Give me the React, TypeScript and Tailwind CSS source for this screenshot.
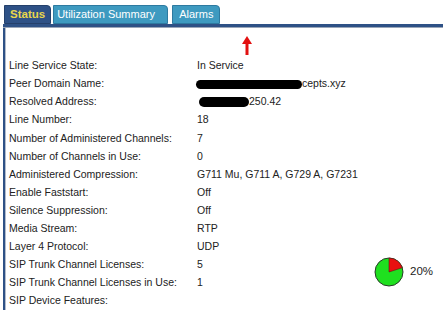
import React from "react";

const rows: [string, React.ReactNode][] = [
  ["Line Service State:", "In Service"],
  [
    "Peer Domain Name:",
    <span className="flex items-center">
      <span className="inline-block w-[106px] h-[9px] bg-black rounded-full -ml-[1px]" />
      <span>cepts.xyz</span>
    </span>,
  ],
  [
    "Resolved Address:",
    <span className="flex items-center">
      <span className="inline-block w-[50px] h-[10px] bg-black rounded-full ml-[2px]" />
      <span>250.42</span>
    </span>,
  ],
  ["Line Number:", "18"],
  ["Number of Administered Channels:", "7"],
  ["Number of Channels in Use:", "0"],
  ["Administered Compression:", "G711 Mu, G711 A, G729 A, G7231"],
  ["Enable Faststart:", "Off"],
  ["Silence Suppression:", "Off"],
  ["Media Stream:", "RTP"],
  ["Layer 4 Protocol:", "UDP"],
  ["SIP Trunk Channel Licenses:", "5"],
  ["SIP Trunk Channel Licenses in Use:", "1"],
  ["SIP Device Features:", ""],
];

export default function App() {
  return (
    <div className="w-[443px] h-[310px] bg-white overflow-hidden relative font-['Liberation_Sans',Arial,sans-serif] text-[10.5px] text-[#222]">
      <div className="flex items-end pl-[4px] pt-[5px] gap-[2px]">
        <div className="h-[19px] px-[5px] bg-[#2e5186] text-[#e9d64c] font-bold text-[11.5px] rounded-tr-[4px] flex items-center border border-[#24406b]">
          Status
        </div>
        <div className="h-[19px] w-[115px] pl-[3px] bg-[#3e9ac0] text-white text-[11px] rounded-tr-[4px] flex items-center border border-[#2d7aa0]">
          Utilization Summary
        </div>
        <div className="h-[19px] w-[48px] ml-[2px] pl-[6px] bg-[#3e9ac0] text-white text-[11px] rounded-tr-[4px] flex items-center border border-[#2d7aa0]">
          Alarms
        </div>
      </div>
      <div className="ml-[3px] h-[4px] bg-[#2e5186] border-b border-[#9aa6b8]" />
      <div className="ml-[3px] flex">
        <div className="w-[3px] bg-[#2e5186] border-r border-[#b3bccb] h-[300px]" />
        <div className="flex-1 pt-[29px] pl-[3px]">
          {rows.map(([label, value]) => (
            <div key={label} className="h-[18.1px] flex items-center">
              <div className="w-[188px]">{label}</div>
              <div>{value}</div>
            </div>
          ))}
        </div>
      </div>
      <div className="absolute left-[241px] top-[36px] flex flex-col items-center">
        <svg width="12" height="20" viewBox="0 0 12 20">
          <polygon points="6,0 11,8 1,8" fill="#e21010" />
          <rect x="4.5" y="7" width="3" height="12" fill="#e21010" />
        </svg>
      </div>
      <div className="absolute left-[374px] top-[257px] flex items-center gap-[6px]">
        <svg width="30" height="30" viewBox="0 0 30 30">
          <circle cx="15" cy="15" r="14" fill="#1fe01f" stroke="#2a3a2a" strokeWidth="1" />
          <path d="M15 15 L15 1 A14 14 0 0 1 28.3 10.7 Z" fill="#e81010" stroke="#5a1a1a" strokeWidth="0.6" />
        </svg>
        <span className="text-[11.5px]">20%</span>
      </div>
    </div>
  );
}
